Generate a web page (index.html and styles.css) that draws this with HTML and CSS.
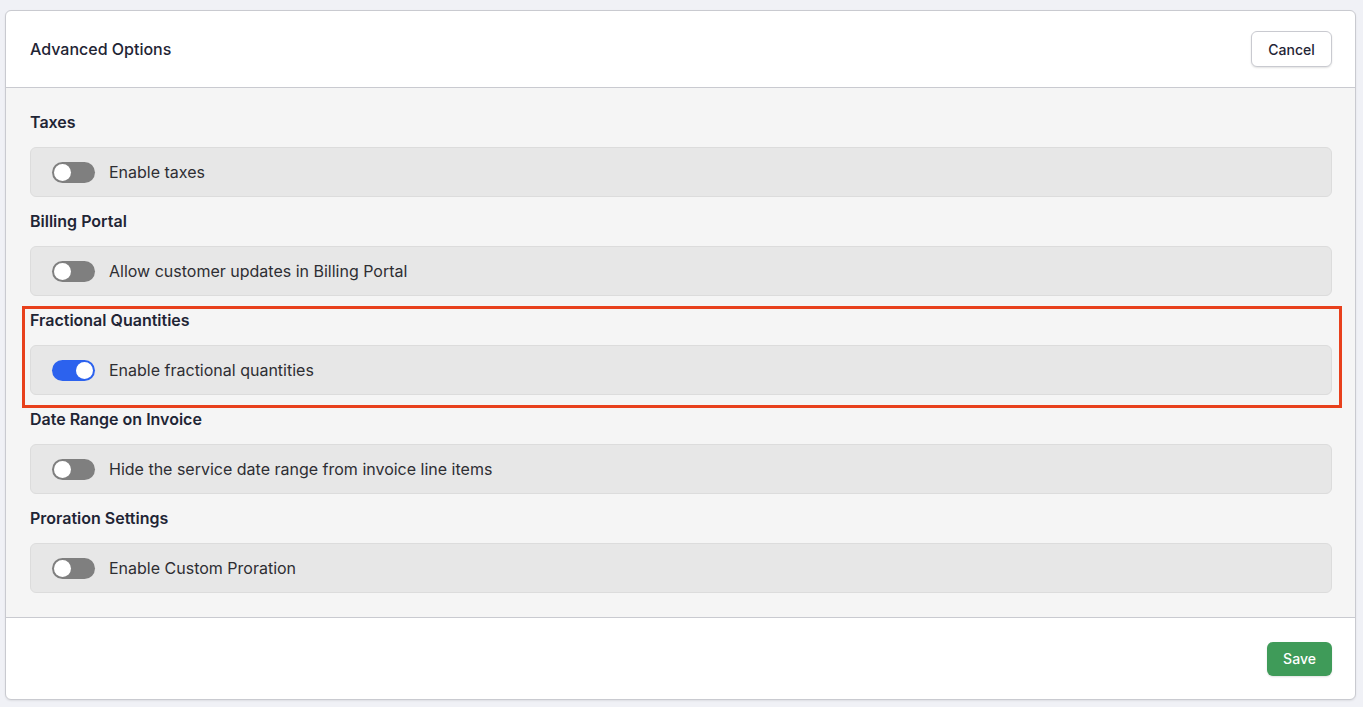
FILE: index.html
```html
<!DOCTYPE html>
<html lang="en">
<head>
<meta charset="utf-8">
<title>Advanced Options</title>
<link rel="stylesheet" href="styles.css">
</head>
<body>
<div class="card">
  <header class="card-header">
    <h1 class="title">Advanced Options</h1>
    <button class="btn btn-cancel" type="button">Cancel</button>
  </header>
  <main class="card-body">
    <section class="option">
      <h2 class="option-title">Taxes</h2>
      <label class="option-row"><span class="toggle"><span class="knob"></span></span><span class="option-label">Enable taxes</span></label>
    </section>
    <section class="option">
      <h2 class="option-title">Billing Portal</h2>
      <label class="option-row"><span class="toggle"><span class="knob"></span></span><span class="option-label">Allow customer updates in Billing Portal</span></label>
    </section>
    <section class="option highlighted">
      <h2 class="option-title">Fractional Quantities</h2>
      <label class="option-row"><span class="toggle on"><span class="knob"></span></span><span class="option-label">Enable fractional quantities</span></label>
    </section>
    <section class="option">
      <h2 class="option-title">Date Range on Invoice</h2>
      <label class="option-row"><span class="toggle"><span class="knob"></span></span><span class="option-label">Hide the service date range from invoice line items</span></label>
    </section>
    <section class="option">
      <h2 class="option-title">Proration Settings</h2>
      <label class="option-row"><span class="toggle"><span class="knob"></span></span><span class="option-label">Enable Custom Proration</span></label>
    </section>
  </main>
  <footer class="card-footer">
    <button class="btn btn-save" type="button">Save</button>
  </footer>
</div>
</body>
</html>
```
FILE: styles.css
```css
* { box-sizing: border-box; }
html, body { height: 100%; }
body {
  margin: 0;
  padding: 10px 7px 7px 5px;
  background: #f0f1f6;
  font-family: Inter, "Noto Sans", sans-serif;
  color: #1f2535;
}
.card {
  height: 690px;
  background: #fff;
  border: 1px solid #c9cad0;
  border-radius: 6px;
  display: flex;
  flex-direction: column;
  overflow: hidden;
  box-shadow: 0 1px 2px rgba(0,0,0,0.08);
}
.card-header {
  height: 77px;
  flex: none;
  display: flex;
  align-items: center;
  justify-content: space-between;
  padding: 0 23px 0 24px;
  border-bottom: 1px solid #c9cad0;
}
.title {
  margin: 0;
  font-size: 16px;
  font-weight: 500;
  color: #1f2535;
}
.btn {
  font-family: inherit;
  font-size: 14px;
  border-radius: 6px;
  cursor: pointer;
}
.btn-cancel {
  width: 81px;
  height: 36px;
  background: #fff;
  border: 1px solid #c9cad0;
  color: #1f2535;
  font-weight: 500;
  box-shadow: 0 1px 2px rgba(0,0,0,0.12);
}
.card-body {
  flex: none;
  background: #f5f5f5;
  padding: 24px 23px 24px 24px;
  display: flex;
  flex-direction: column;
  gap: 14px;
  border-bottom: 1px solid #c9cad0;
}
.option { position: relative; }
.option-title {
  margin: 0 0 15px;
  font-size: 16px;
  line-height: 20px;
  font-weight: 600;
  color: #1f2535;
}
.option-row {
  height: 50px;
  display: flex;
  align-items: center;
  gap: 14px;
  padding: 0 21px;
  background: #e7e7e7;
  border: 1px solid #dcdcdc;
  border-radius: 6px;
}
.option-label {
  font-size: 16px;
  color: #2e2e33;
}
.toggle {
  position: relative;
  width: 43px;
  height: 21px;
  border-radius: 11px;
  background: #7f7f7f;
  flex: none;
}
.toggle .knob {
  position: absolute;
  top: 2px;
  left: 2px;
  width: 17px;
  height: 17px;
  border-radius: 50%;
  background: #fff;
}
.toggle.on { background: #2c62ee; }
.toggle.on .knob { left: 24px; }
.highlighted::after {
  content: "";
  position: absolute;
  top: -4px;
  left: -8px;
  right: -10px;
  bottom: -13px;
  border: 3px solid #e8401c;
  pointer-events: none;
}
.card-footer {
  flex: 1;
  display: flex;
  align-items: center;
  justify-content: flex-end;
  padding: 0 23px;
}
.btn-save {
  width: 65px;
  height: 34px;
  background: #3f9b59;
  border: none;
  color: #fff;
  font-weight: 500;
  box-shadow: 0 1px 2px rgba(0,0,0,0.12);
}
```
